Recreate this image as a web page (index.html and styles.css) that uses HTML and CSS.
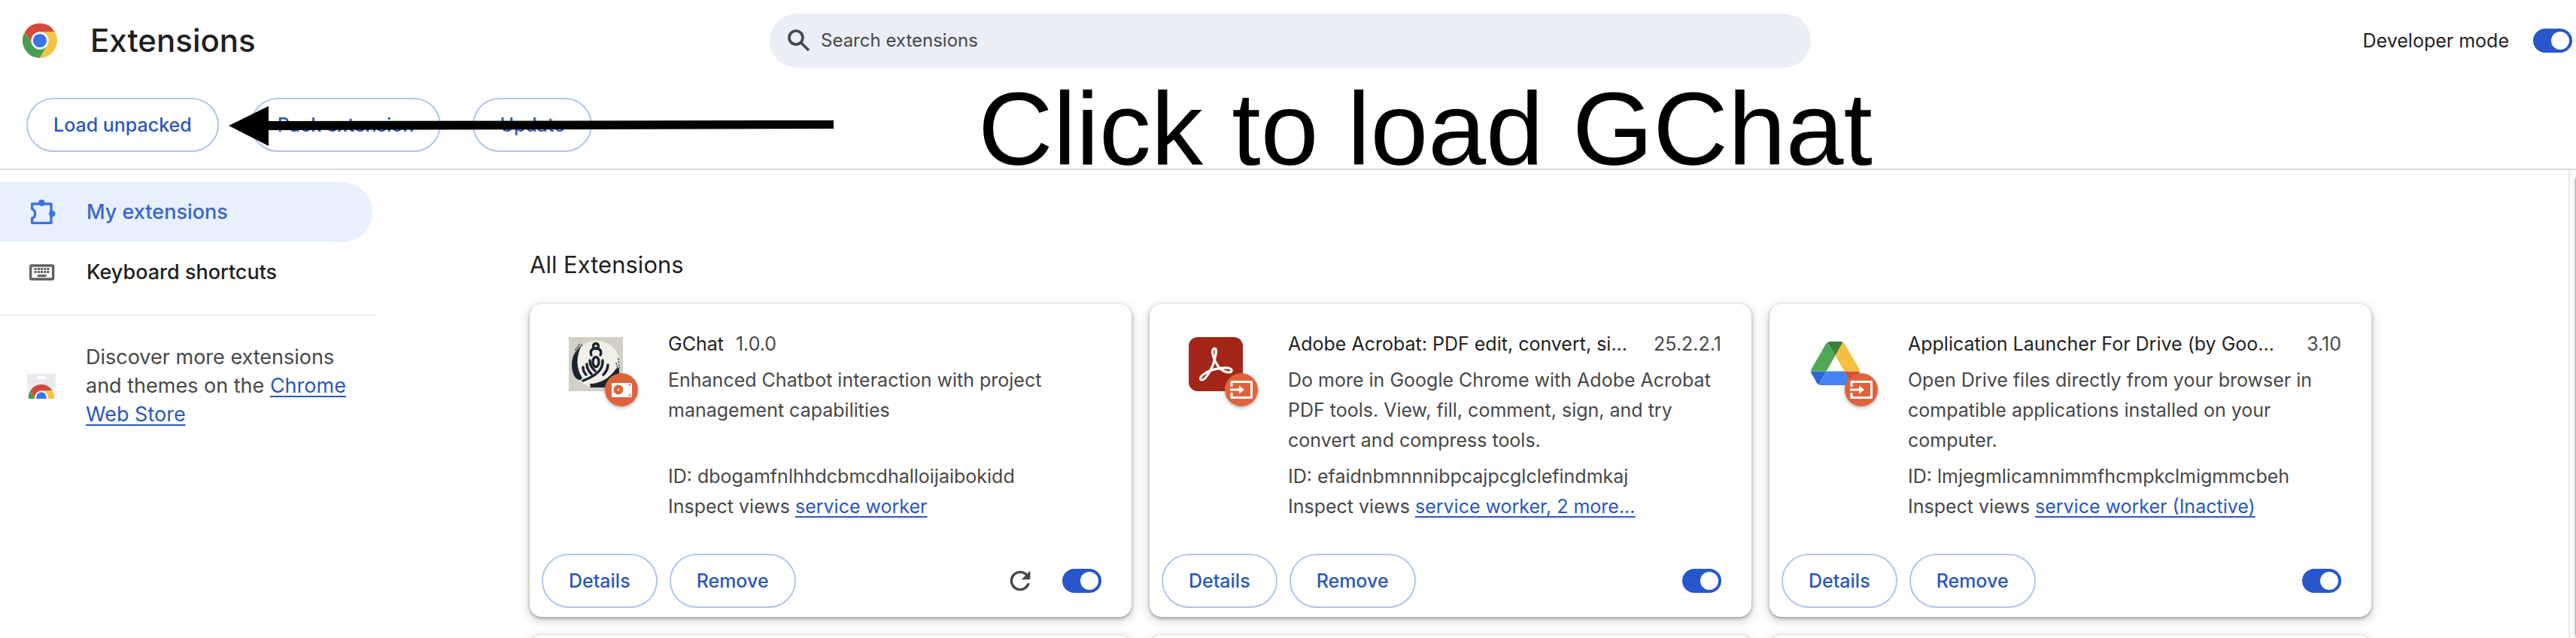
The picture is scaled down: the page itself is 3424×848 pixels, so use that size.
FILE: index.html
```html
<!DOCTYPE html>
<html lang="en">
<head>
<meta charset="utf-8">
<title>Extensions</title>
<link rel="stylesheet" href="styles.css">
</head>
<body>
<svg class="defs" aria-hidden="true">
  <symbol id="chrome" viewBox="0 0 48 48">
    <path fill="#d64937" d="M24 12h20.78A24 24 0 0 0 3.21 12l10.4 18A12 12 0 0 1 24 12z"/>
    <path fill="#4a9e54" d="M34.39 30 24 48A24 24 0 0 1 3.21 12L13.61 30A12 12 0 0 0 34.39 30z"/>
    <path fill="#f5c445" d="M24 12a12 12 0 0 1 10.39 18L24 48A24 24 0 0 0 44.78 12z"/>
    <circle cx="24" cy="24" r="12" fill="#fff"/>
    <circle cx="24" cy="24" r="9.5" fill="#3b72e4"/>
  </symbol>
  <symbol id="input-badge" viewBox="0 0 44 44">
    <path d="M9 18v-6.5h26.5v21H9V26" fill="none" stroke="#fff" stroke-width="3" stroke-linejoin="round"/>
    <path d="M7 20.6h12V16.500l7 5.500-7 5.500v-4.100H7z" fill="#fff"/>
  </symbol>
</svg>

<header class="header">
  <div class="topbar">
    <div class="brand">
      <svg class="brand-logo"><use href="#chrome"/></svg>
      <h1 class="brand-title">Extensions</h1>
    </div>
    <label class="search">
      <svg class="search-icon" viewBox="0 0 30 30" fill="none" stroke="#474747" stroke-width="3.6"><circle cx="11" cy="11" r="9"/><path d="M17.500 17.500 28 28"/></svg>
      <input class="search-input" type="search" placeholder="Search extensions" aria-label="Search extensions">
    </label>
    <label class="dev-mode">Developer mode <input class="toggle" type="checkbox" checked></label>
  </div>
  <div class="toolbar">
    <button class="btn">Load unpacked</button>
    <button class="btn">Pack extension</button>
    <button class="btn">Update</button>
  </div>
</header>

<div class="body">
  <nav class="sidebar">
    <a class="nav-item nav-item-active" href="#extensions">
      <svg class="nav-icon" viewBox="50 30 120 120"><path d="M67 57h76v76H67v-19a12 18 0 0 0 0-36z" fill="none" stroke="#3b72e4" stroke-width="10" stroke-linejoin="round"/><circle cx="105" cy="53" r="13" fill="#3b72e4"/><circle cx="147" cy="96" r="13" fill="#3b72e4"/></svg>
      My extensions
    </a>
    <a class="nav-item" href="#shortcuts">
      <svg class="nav-icon" viewBox="49 276 120 120" fill="#5f6063"><rect x="60" y="309" width="90" height="54" rx="4" fill="none" stroke="#5f6063" stroke-width="10"/><path d="M75 318h9v9h-9zm13 0h9v9h-9zm12 0h9v9h-9zm13 0h9v9h-9zm12 0h9v9h-9zM75 330h9v9h-9zm13 0h9v9h-9zm12 0h9v9h-9zm13 0h9v9h-9zm12 0h9v9h-9zM87 345h36v9H87z"/></svg>
      Keyboard shortcuts
    </a>
    <div class="store">
      <svg class="store-icon" viewBox="0 0 38 33"><path fill="#e8eaed" d="M0 0h38v33H0z"/><path fill="#eff0f3" d="M0 17h38v16H0z"/><rect x="13" y="3" width="12" height="4" rx="2" fill="#fff"/><svg x="2" y="14" width="34" height="34"><use href="#chrome"/></svg></svg>
      <p class="store-text">Discover more extensions and themes on the <a class="link" href="#store">Chrome Web Store</a></p>
    </div>
  </nav>

  <main class="content">
    <h2 class="section-title">All Extensions</h2>
    <div class="cards">
      <article class="card">
        <div class="card-main">
          <div class="icon">
            <svg class="icon-img" viewBox="0 0 72 72"><path fill="#d3d0c5" d="M0 0h72v72H0z"/><circle cx="37" cy="36" r="31" fill="#f1f0e8"/>
              <path fill="#18242e" d="M17 11C4 20 1 38 7 51c2 4 5 6 9 6l2-3C10 42 9 27 17 11zM28 62c13 0 25-6 35-20l4-2v27H29z"/>
              <path d="M18 10 9 21M15 9 8 18M66 28l1 14M63 34l2 8" stroke="#4a545b" stroke-width="1.500" stroke-dasharray="3 1"/>
              <g fill="none" stroke="#18242e" stroke-width="3.400" stroke-linecap="round"><circle cx="36" cy="12" r="3.500"/><path d="M30 24c-3-7 3-9 6-9s9 2 6 9"/><ellipse cx="36" cy="33" rx="4" ry="6.500"/><path d="M28 31c0 7 3 10 7 14M24 36c0 6 3 10 6 13M19 40c0 5 2 8 4 10M45 31c1 12-8 20-26 27M52 37c0 6-3 10-6 13"/></g></svg>
            <svg class="badge" viewBox="0 0 44 44"><rect x="9" y="13" width="27" height="19" rx="1.500" fill="#fff"/><circle cx="18" cy="22" r="6.500" fill="#df633a"/><circle cx="18" cy="22" r="1.300" fill="#fff"/><circle cx="33" cy="15.500" r="1.200" fill="#df633a"/><circle cx="33" cy="29.500" r="1.200" fill="#df633a"/></svg>
          </div>
          <div class="info">
            <div class="title-row"><h3 class="name">GChat</h3><span class="version">1.0.0</span></div>
            <p class="desc">Enhanced Chatbot interaction with project management capabilities</p>
            <p class="meta">ID: dbogamfnlhhdcbmcdhalloijaibokidd</p>
            <p class="meta">Inspect views <a class="link" href="#w1">service worker</a></p>
          </div>
        </div>
        <div class="actions">
          <button class="btn">Details</button>
          <button class="btn">Remove</button>
          <button class="reload" aria-label="Reload"><svg viewBox="0 0 24 24" width="40" height="40"><path fill="#474747" d="M17.650 6.350A7.958 7.958 0 0 0 12 4a8 8 0 1 0 7.730 10h-2.080A6 6 0 1 1 12 6c1.660 0 3.140.690 4.220 1.780L13 11h7V4z"/></svg></button>
          <input class="toggle" type="checkbox" checked aria-label="Enable GChat">
        </div>
      </article>

      <article class="card">
        <div class="card-main">
          <div class="icon">
            <svg class="icon-img" viewBox="0 0 72 72"><rect width="72" height="72" rx="12" fill="#a32619"/><path d="M34.500 15c-4 0-4 8 1 18 4 8 11 14 18 14 5 0 5-5-1-6-8-1-24 2-32 8-6 4-6 8-3 8 4 0 10-9 14-18 4-10 7-24 3-24z" fill="none" stroke="#fff" stroke-width="3.200"/></svg>
            <svg class="badge"><use href="#input-badge"/></svg>
          </div>
          <div class="info">
            <div class="title-row"><h3 class="name">Adobe Acrobat: PDF edit, convert, si...</h3><span class="version version-end">25.2.2.1</span></div>
            <p class="desc">Do more in Google Chrome with Adobe Acrobat PDF tools. View, fill, comment, sign, and try convert and compress tools.</p>
            <p class="meta">ID: efaidnbmnnnibpcajpcglclefindmkaj</p>
            <p class="meta">Inspect views <a class="link" href="#w2">service worker, 2 more...</a></p>
          </div>
        </div>
        <div class="actions">
          <button class="btn">Details</button>
          <button class="btn">Remove</button>
          <input class="toggle" type="checkbox" checked aria-label="Enable Adobe Acrobat">
        </div>
      </article>

      <article class="card">
        <div class="card-main">
          <div class="icon">
            <svg class="icon-img" viewBox="0 0 72 72"><svg x="3" y="6" width="65" height="58" viewBox="0 0 87.300 78"><path fill="#2f66d6" d="m6.600 66.850 3.850 6.650c.8 1.400 1.950 2.500 3.300 3.300L27.500 53H0c0 1.550.4 3.100 1.200 4.500z"/><path fill="#4fa954" d="M43.650 25 29.900 1.200c-1.350.8-2.500 1.900-3.300 3.300l-25.400 44A9.060 9.060 0 0 0 0 53h27.500z"/><path fill="#dc4b35" d="M73.550 76.800c1.350-.8 2.500-1.900 3.300-3.300l9.250-16c.8-1.400 1.200-2.950 1.200-4.500H59.800l5.850 11.500z"/><path fill="#3a8038" d="M43.650 25 57.400 1.200C56.050.4 54.500 0 52.900 0H34.400c-1.600 0-3.150.450-4.500 1.200z"/><path fill="#4682f3" d="M59.800 53H27.500L13.750 76.800c1.350.8 2.900 1.200 4.500 1.200h50.800c1.600 0 3.150-.450 4.500-1.200z"/><path fill="#f5bf42" d="M73.400 26.500 60.700 4.500c-.8-1.400-1.950-2.500-3.300-3.300L43.650 25 59.800 53h27.450c0-1.550-.4-3.100-1.200-4.500z"/></svg></svg>
            <svg class="badge"><use href="#input-badge"/></svg>
          </div>
          <div class="info">
            <div class="title-row"><h3 class="name">Application Launcher For Drive (by Goo...</h3><span class="version version-end">3.10</span></div>
            <p class="desc">Open Drive files directly from your browser in compatible applications installed on your computer.</p>
            <p class="meta">ID: lmjegmlicamnimmfhcmpkclmigmmcbeh</p>
            <p class="meta">Inspect views <a class="link" href="#w3">service worker (Inactive)</a></p>
          </div>
        </div>
        <div class="actions">
          <button class="btn">Details</button>
          <button class="btn">Remove</button>
          <input class="toggle" type="checkbox" checked aria-label="Enable Application Launcher For Drive">
        </div>
      </article>

      <article class="card"></article>
      <article class="card"></article>
      <article class="card"></article>
    </div>
  </main>
  <div class="scrollbar"><div class="thumb"></div></div>
</div>

<svg class="arrow" viewBox="0 0 804 54"><path d="M0 26 53 0v20L804 19v11L53 32v21z"/></svg>
<p class="callout">Click to load GChat</p>
</body>
</html>
```
FILE: styles.css
```css
* { box-sizing: border-box; }

body {
  margin: 0;
  height: 100vh;
  display: flex;
  flex-direction: column;
  position: relative;
  overflow: hidden;
  background: #fff;
  color: #1f1f1f;
  font: 400 25px/40px Inter, "Liberation Sans", sans-serif;
}

h1, h2, h3, p { margin: 0; font-weight: 400; }

.defs { position: absolute; width: 0; height: 0; }

.link { color: #2a57be; text-decoration: underline; text-decoration-thickness: 2px; text-underline-offset: 4px; }

/* Header */
.header { flex: none; border-bottom: 2px solid #dadbde; }

.topbar {
  display: grid;
  grid-template-columns: 1fr minmax(auto, 1384px) 1fr;
  align-items: center;
  height: 108px;
  padding: 0 5px 0 11px;
}

.brand { display: flex; align-items: center; gap: 44px; padding-left: 19px; }
.brand-logo { width: 46px; height: 46px; }
.brand-title { font-size: 42px; font-weight: 500; line-height: 56px; }

.search {
  display: flex;
  align-items: center;
  gap: 14px;
  height: 72px;
  padding: 0 24px;
  border-radius: 36px;
  background: #ebeef7;
}
.search-icon { width: 30px; height: 30px; flex: none; }
.search-input {
  flex: 1;
  padding: 0;
  border: 0;
  outline: 0;
  background: none;
  color: #1f1f1f;
  font: 400 24px/32px Inter, "Liberation Sans", sans-serif;
}
.search-input::placeholder { color: #474747; opacity: 1; }

.dev-mode { display: flex; align-items: center; justify-content: flex-end; gap: 32px; }

.toolbar { display: flex; gap: 42px; padding: 22px 35px; }

.btn {
  height: 72px;
  padding: 0 34px;
  border: 2px solid #aec5f0;
  border-radius: 36px;
  background: #fff;
  color: #2a57be;
  font: 500 25px/32px Inter, "Liberation Sans", sans-serif;
}

.toggle {
  appearance: none;
  flex: none;
  display: flex;
  justify-content: flex-end;
  width: 52px;
  height: 32px;
  margin: 0;
  padding: 4px;
  border-radius: 16px;
  background: #2757cb;
}
.toggle::after { content: ""; width: 24px; height: 24px; border-radius: 50%; background: #fff; }
.toggle:not(:checked) { justify-content: flex-start; background: #747775; }

/* Body */
.body { flex: 1; min-height: 0; display: flex; }

.sidebar { flex: none; width: 500px; padding-top: 16px; font-size: 27px; }

.nav-item {
  display: flex;
  align-items: center;
  gap: 38px;
  height: 80px;
  margin-right: 5px;
  padding-left: 37px;
  border-radius: 0 40px 40px 0;
  color: #1f1f1f;
  font-weight: 500;
  text-decoration: none;
}
.nav-item-active { background: #e8effd; color: #3766c6; }
.nav-icon { width: 40px; height: 40px; }

.store {
  display: flex;
  align-items: center;
  gap: 40px;
  margin-top: 16px;
  padding: 36px 16px 0 36px;
  border-top: 2px solid #eeeff0;
  color: #474747;
}
.store-icon { width: 38px; height: 33px; flex: none; }
.store-text { line-height: 38px; }

.content { flex: 1; min-width: 0; overflow: hidden; padding: 106px 262px 0 204px; }
.section-title { margin-bottom: 32px; font-size: 31px; }

.cards { display: grid; grid-template-columns: repeat(3, minmax(0, 1fr)); gap: 24px; }

.card {
  display: flex;
  flex-direction: column;
  justify-content: space-between;
  min-height: 416px;
  border-radius: 16px;
  background: #fff;
  box-shadow: 0 2px 4px rgba(60, 64, 67, .45), 0 4px 12px 4px rgba(60, 64, 67, .14);
}

.card-main { display: flex; gap: 60px; padding: 33px 40px 0 52px; }

.icon { position: relative; flex: none; width: 72px; height: 72px; margin-top: 11px; }
.icon-img { display: block; width: 72px; height: 72px; }
.badge {
  position: absolute;
  right: -20px;
  bottom: -20px;
  width: 44px;
  height: 44px;
  border-radius: 50%;
  background: #df633a;
  box-shadow: 0 2px 4px rgba(60, 64, 67, .4);
}

.info { flex: 1; min-width: 0; color: #474747; }
.title-row { display: flex; gap: 16px; margin-bottom: 8px; }
.name {
  min-width: 0;
  overflow: hidden;
  color: #1f1f1f;
  font-size: inherit;
  text-overflow: ellipsis;
  white-space: nowrap;
}
.version-end { margin-left: auto; }
.desc { min-height: 120px; margin-bottom: 8px; }

.actions { display: flex; align-items: center; gap: 16px; padding: 0 40px 12px 16px; }
.actions .toggle { margin-left: auto; }
.reload { display: flex; margin-left: auto; padding: 0; border: 0; background: none; }
.actions .reload + .toggle { margin-left: 20px; }

.scrollbar { flex: none; width: 10px; padding: 8px 0 0 6px; border-left: 2px solid #e8e8e8; background: #fafafa; overflow: hidden; }
.thumb { width: 12px; height: 100%; border-radius: 6px; background: #c1c1c1; }

/* Annotation drawn over the page */
.arrow { position: absolute; left: 304px; top: 141px; width: 804px; height: 54px; }
.callout {
  position: absolute;
  left: 1300px;
  top: 102px;
  color: #000;
  font: 400 138px/138px "Liberation Sans", sans-serif;
  white-space: nowrap;
}
```
